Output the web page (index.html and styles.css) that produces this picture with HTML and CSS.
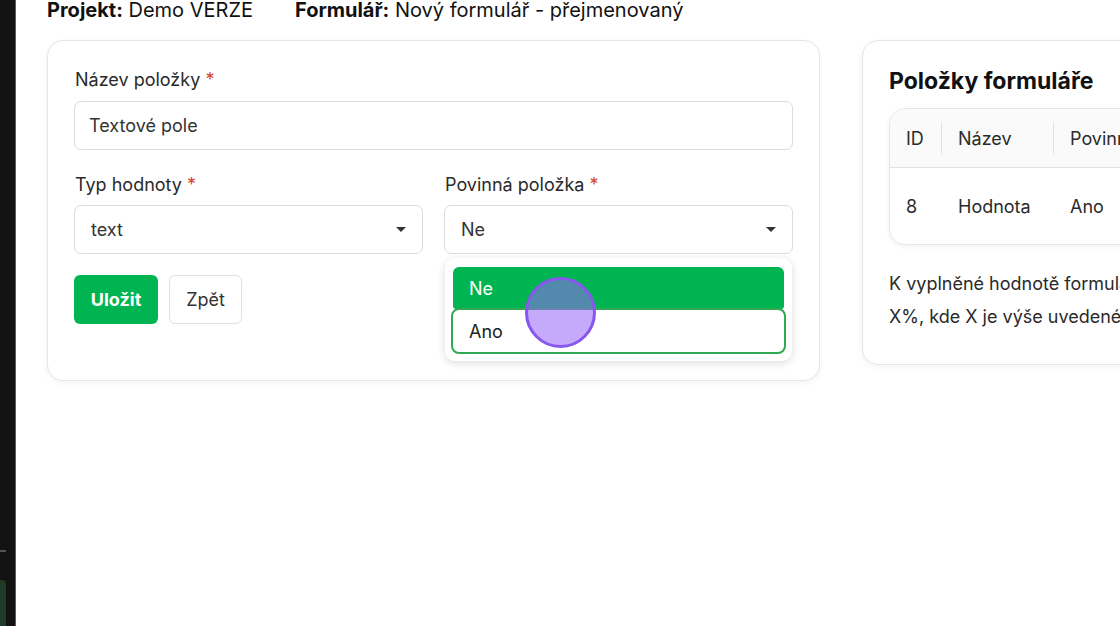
FILE: index.html
```html
<!DOCTYPE html>
<html lang="cs">
<head>
<meta charset="utf-8">
<title>Formulář</title>
<link rel="stylesheet" href="styles.css">
</head>
<body>
<div class="app">
  <aside class="sidebar">
    <div class="side-line"></div>
    <div class="side-item"></div>
  </aside>
  <main class="main">
    <div class="crumbs">
      <span><b>Projekt:</b> Demo VERZE</span>
      <span><b>Formulář:</b> Nový formulář - přejmenovaný</span>
    </div>
    <div class="cards">
      <section class="card form-card">
        <div class="field">
          <label class="label first">Název položky <span class="req">*</span></label>
          <div class="input">Textové pole</div>
        </div>
        <div class="row">
          <div class="field">
            <label class="label">Typ hodnoty <span class="req">*</span></label>
            <div class="input select">text<span class="caret"></span></div>
          </div>
          <div class="field drop-host">
            <label class="label">Povinná položka <span class="req">*</span></label>
            <div class="input select">Ne<span class="caret"></span></div>
            <div class="dropdown">
              <div class="opt opt-selected">Ne</div>
              <div class="opt opt-focus">Ano</div>
            </div>
            <div class="cursor"></div>
          </div>
        </div>
        <div class="actions">
          <button class="btn btn-primary">Uložit</button>
          <button class="btn btn-secondary">Zpět</button>
        </div>
      </section>
      <section class="card list-card">
        <h2 class="title">Položky formuláře</h2>
        <div class="table">
          <div class="thead">
            <div class="cell c-id">ID</div>
            <div class="sep"></div>
            <div class="cell c-name">Název</div>
            <div class="sep"></div>
            <div class="cell c-req">Povinná</div>
          </div>
          <div class="trow">
            <div class="cell c-id">8</div>
            <div class="cell c-name">Hodnota</div>
            <div class="cell c-req">Ano</div>
          </div>
        </div>
        <p class="note">K vyplněné hodnotě formuláře bude připočteno<br>X%, kde X je výše uvedené číslo.</p>
      </section>
    </div>
  </main>
</div>
</body>
</html>
```

FILE: styles.css
```css
* { box-sizing: border-box; }
html, body { margin: 0; padding: 0; }
body {
  font-family: Inter, "Noto Sans", Arial, sans-serif;
  color: #222;
  background: #fff;
  width: 1120px;
  height: 626px;
  overflow: hidden;
}
.app {
  display: flex;
  height: 626px;
}
.sidebar {
  width: 16px;
  flex: 0 0 16px;
  background: #121212;
  border-right: 1px solid #5a5a5a;
  position: relative;
}
.side-line {
  position: absolute;
  left: 0;
  top: 550px;
  width: 6px;
  height: 2px;
  background: #555;
}
.side-item {
  position: absolute;
  left: 0;
  top: 580px;
  width: 6px;
  height: 46px;
  background: #1d3b25;
  border-radius: 0 4px 0 0;
}
.main {
  flex: 1;
  padding-left: 31px;
  min-width: 0;
}
.crumbs {
  display: flex;
  gap: 42px;
  font-size: 20px;
  line-height: 22px;
  margin-top: -1px;
  color: #111;
  white-space: nowrap;
}
.crumbs b { font-weight: 700; }
.cards {
  display: flex;
  gap: 42px;
  align-items: flex-start;
  margin-top: 19px;
}
.card {
  background: #fff;
  border: 1px solid #e6e6e6;
  border-radius: 16px;
  box-shadow: 0 2px 6px rgba(0,0,0,0.05);
  flex-shrink: 0;
}
.form-card {
  width: 773px;
  height: 341px;
  padding: 28px 26px 0 26px;
}
.field { display: flex; flex-direction: column; }
.label {
  font-size: 18px;
  line-height: 22px;
  color: #2a2a2a;
  padding-left: 1px;
  margin-bottom: 9px;
}
.label.first { margin-bottom: 10px; }
.req { color: #d4462a; }
.input {
  height: 49px;
  border: 1px solid #dcdcdc;
  border-radius: 7px;
  padding: 0 15px 0 14px;
  font-size: 18px;
  color: #333;
  display: flex;
  align-items: center;
  background: #fff;
}
.select { justify-content: space-between; padding-right: 16px; padding-left: 16px; }
.caret {
  width: 0; height: 0;
  border-left: 5px solid transparent;
  border-right: 5px solid transparent;
  border-top: 5px solid #333;
}
.row {
  display: grid;
  grid-template-columns: 1fr 1fr;
  gap: 21px;
  margin-top: 24px;
}
.drop-host { position: relative; }
.dropdown {
  position: absolute;
  left: 1px;
  right: 1px;
  top: 84px;
  background: #fff;
  border-radius: 10px;
  box-shadow: 0 2px 9px rgba(0,0,0,0.14);
  padding: 9px 6px 7px 6px;
  z-index: 2;
}
.opt {
  font-size: 18px;
  color: #222;
  display: flex;
  align-items: center;
  padding-left: 16px;
}
.opt-selected {
  height: 42px;
  margin: 0 2px;
  background: #00b551;
  color: #fff;
  border-radius: 6px 6px 3px 3px;
}
.opt-focus {
  height: 46px;
  margin-top: -1px;
  border: 2px solid #31a853;
  border-radius: 8px;
  padding-left: 16px;
}
.cursor {
  position: absolute;
  left: 81px;
  top: 103px;
  width: 71px;
  height: 71px;
  border-radius: 50%;
  background: rgba(150, 100, 250, 0.55);
  border: 3px solid #8857ee;
  z-index: 3;
}
.actions {
  display: flex;
  gap: 11px;
  margin-top: 21px;
}
.btn {
  height: 49px;
  font-family: inherit;
  font-size: 18px;
  border-radius: 6px;
  padding: 0;
  cursor: pointer;
}
.btn-primary {
  width: 84px;
  background: #00b551;
  color: #fff;
  font-weight: 700;
  border: none;
}
.btn-secondary {
  width: 73px;
  background: #fff;
  color: #333;
  border: 1px solid #e0e0e0;
}
.list-card {
  width: 430px;
  height: 325px;
  padding: 25px 26px 0 26px;
}
.title {
  margin: 0;
  font-size: 23px;
  line-height: 30px;
  font-weight: 700;
  color: #111;
}
.table {
  margin-top: 12px;
  border: 1px solid #e6e6e6;
  border-radius: 16px;
  overflow: hidden;
  box-shadow: 0 2px 5px rgba(0,0,0,0.05);
  width: 420px;
}
.thead {
  display: flex;
  align-items: center;
  height: 59px;
  background: #fafafa;
  border-bottom: 1px solid #e3e3e3;
}
.trow {
  display: flex;
  align-items: center;
  height: 76px;
}
.cell {
  font-size: 18px;
  color: #2a2a2a;
  padding-left: 16px;
  white-space: nowrap;
}
.c-id { width: 52px; }
.c-name { width: 112px; }
.thead .c-id { width: 51px; }
.thead .c-name { width: 111px; }
.sep {
  width: 1px;
  height: 32px;
  background: #e3e3e3;
}
.note {
  margin: 22px 0 0 0;
  font-size: 18px;
  line-height: 33px;
  color: #2a2a2a;
  white-space: nowrap;
}
```
